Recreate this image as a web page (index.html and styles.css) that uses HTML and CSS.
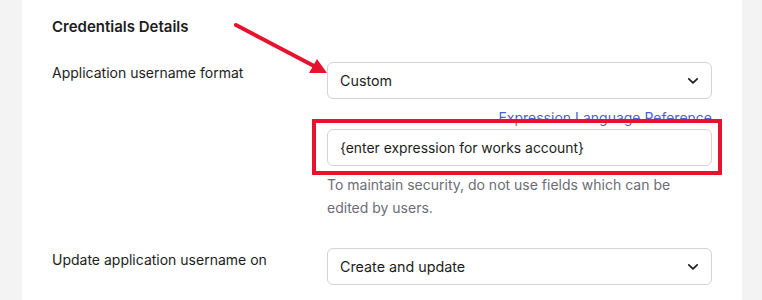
FILE: index.html
```html
<!DOCTYPE html>
<html>
<head>
<meta charset="utf-8">
<link rel="stylesheet" href="styles.css">
</head>
<body>
<div class="page">
  <main class="panel">
    <h2 class="title">Credentials Details</h2>
    <div class="row row-first">
      <div class="label">Application username format</div>
      <div class="field">
        <div class="select">
          <span>Custom</span>
          <svg class="chev" width="12" height="8" viewBox="0 0 12 8"><path d="M1.8 1.8 L6 5.8 L10.2 1.8" fill="none" stroke="#1d1d21" stroke-width="1.7" stroke-linecap="round" stroke-linejoin="round"/></svg>
        </div>
        <div class="link-row"><a class="link">Expression Language Reference</a></div>
        <div class="input-wrap">
          <div class="input">{enter expression for works account}</div>
          <div class="highlight"></div>
        </div>
        <p class="help">To maintain security, do not use fields which can be edited by users.</p>
      </div>
    </div>
    <div class="row row-second">
      <div class="label">Update application username on</div>
      <div class="field">
        <div class="select">
          <span>Create and update</span>
          <svg class="chev" width="12" height="8" viewBox="0 0 12 8"><path d="M1.8 1.8 L6 5.8 L10.2 1.8" fill="none" stroke="#1d1d21" stroke-width="1.7" stroke-linecap="round" stroke-linejoin="round"/></svg>
        </div>
      </div>
    </div>
    <svg class="arrow" width="762" height="300" viewBox="0 0 762 300">
      <line x1="236" y1="25" x2="314" y2="66" stroke="#e6122e" stroke-width="4" stroke-linecap="round"/>
      <polygon points="327,73 309,73 317,59" fill="#e6122e"/>
    </svg>
  </main>
</div>
</body>
</html>
```

FILE: styles.css
```css
html, body {
  margin: 0;
  padding: 0;
  background: #f3f3f4;
  font-family: Inter, "Noto Sans", sans-serif;
  color: #1d1d21;
}
.page {
  width: 762px;
  height: 300px;
  overflow: hidden;
}
.panel {
  margin-left: 22px;
  width: 720px;
  height: 300px;
  background: #ffffff;
  padding: 17px 30px 0 30px;
  box-sizing: border-box;
}
.title {
  margin: 0;
  font-size: 15px;
  line-height: 20px;
  font-weight: 600;
}
.row {
  display: flex;
}
.row-first {
  margin-top: 25px;
}
.row-second {
  margin-top: 29px;
}
.label {
  width: 275px;
  flex: none;
  font-size: 14px;
  line-height: 20px;
  padding-top: 1px;
}
.row-second .label {
  padding-top: 2px;
}
.field {
  width: 385px;
  flex: none;
}
.select, .input {
  height: 37px;
  box-sizing: border-box;
  border: 1px solid #d3d3d8;
  border-radius: 6px;
  padding: 0 12px 0 12px;
  display: flex;
  align-items: center;
  font-size: 14.3px;
  color: #1d1d21;
}
.input {
  font-size: 13.9px;
}
.select span {
  flex: 1;
}
.chev {
  display: block;
}
.link-row {
  display: flex;
  justify-content: flex-end;
  height: 20px;
  margin-top: 9px;
}
.link {
  font-size: 14px;
  line-height: 20px;
  color: #4f5fcc;
}
.input-wrap {
  position: relative;
  margin-top: 1px;
}
.highlight {
  position: absolute;
  left: -15px;
  right: -10px;
  top: -10px;
  bottom: -9px;
  border: 4px solid #e6122e;
}
.help {
  margin: 7px 0 0 0;
  font-size: 14px;
  line-height: 23px;
  color: #6c6c75;
}
.arrow {
  position: absolute;
  left: 0;
  top: 0;
  pointer-events: none;
}
```
